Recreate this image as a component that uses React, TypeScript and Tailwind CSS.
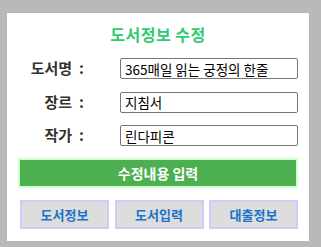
export default function App() {
  const rows = [
    { label: "도서명", value: "365매일 읽는 궁정의 한줄" },
    { label: "장르", value: "지침서" },
    { label: "작가", value: "린다피콘" },
  ];
  const navs = ["도서정보", "도서입력", "대출정보"];

  return (
    <div
      className="w-[321px] h-[247px] bg-[#b9b9b9] pt-[13px] pl-[7px] overflow-hidden"
      style={{ fontFamily: '"Noto Sans CJK KR", "Noto Sans", sans-serif' }}
    >
      <div className="w-[302px] h-[228px] bg-white pt-[10px] flex flex-col">
        {/* Title */}
        <h1 className="h-[22px] leading-[22px] text-center text-[16px] font-bold text-[#2ecc71] tracking-[0.5px]">
          도서정보 수정
        </h1>

        {/* Form rows */}
        <div className="mt-[13px] flex flex-col gap-[12.5px]">
          {rows.map((r) => (
            <div key={r.label} className="flex items-center h-[21px]">
              <label className="w-[77px] text-right text-[15px] font-bold text-[#333]">
                {r.label}
                <span className="ml-[7px]">:</span>
              </label>
              <input
                readOnly
                value={r.value}
                className="ml-[36px] w-[178px] h-[21px] border border-[#767676] rounded-[2px] px-[4px] text-[13.5px] text-black outline-none"
                style={{ fontFamily: '"Noto Sans CJK KR", sans-serif' }}
              />
            </div>
          ))}
        </div>

        {/* Submit */}
        <button className="mt-[12px] ml-[11px] w-[280px] h-[30px] bg-[#4caf50] border-2 border-[#ccffcc] text-white text-[14px] font-bold">
          수정내용 입력
        </button>

        {/* Nav */}
        <div className="mt-[12px] ml-[13px] flex gap-[5.5px]">
          {navs.map((n) => (
            <button
              key={n}
              className="w-[89px] h-[29px] bg-[#dddddd] border-2 border-[#ccccff] text-[#1a73c8] text-[13px] font-bold"
            >
              {n}
            </button>
          ))}
        </div>
      </div>
    </div>
  );
}
